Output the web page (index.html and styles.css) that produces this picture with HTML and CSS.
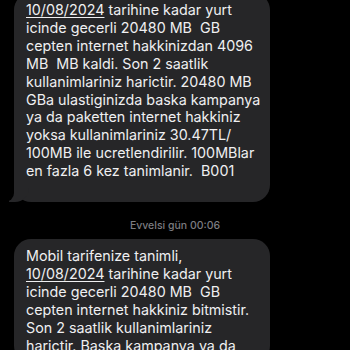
FILE: index.html
```html
<!DOCTYPE html>
<html lang="tr">
<head>
    <meta charset="UTF-8">
    <meta name="viewport" content="width=device-width, initial-scale=1.0">
    <title>Mesajlar</title>
    <link rel="stylesheet" href="styles.css">
</head>
<body>
<div class="thread">
    <div class="bubble bubble-tail bubble-last">
        <p><span class="link">10/08/2024</span> tarihine kadar yurt<br>icinde gecerli 20480 MB  GB<br>cepten internet hakkinizdan 4096<br>MB  MB kaldi. Son 2 saatlik<br>kullanimlariniz harictir. 20480 MB<br>GBa ulastiginizda baska kampanya<br>ya da paketten internet hakkiniz<br>yoksa kullanimlariniz 30.47TL/<br>100MB ile ucretlendirilir. 100MBlar<br>en fazla 6 kez tanimlanir.  B001</p>
    </div>

    <div class="stamp">Evvelsi gün 00:06</div>

    <div class="bubble">
        <p>Mobil tarifenize tanimli,<br><span class="link">10/08/2024</span> tarihine kadar yurt<br>icinde gecerli 20480 MB  GB<br>cepten internet hakkiniz bitmistir.<br>Son 2 saatlik kullanimlariniz<br>harictir. Baska kampanya ya da</p>
    </div>
</div>
</body>
</html>
```

FILE: styles.css
```css
body {
    margin: 0;
    background-color: #000;
    font-family: Inter, "Liberation Sans", sans-serif;
    color: #efeff1;
    overflow: hidden;
}

.thread {
    display: flex;
    flex-direction: column;
    align-items: flex-start;
    margin-top: -7px;
    padding-left: 14px;
}

.bubble {
    position: relative;
    width: 256px;
    box-sizing: border-box;
    padding: 8px 12px;
    background-color: #262628;
    border-radius: 17px;
}

.bubble p {
    margin: 0;
    font-size: 14.3px;
    line-height: 17.9px;
    white-space: pre;
}

.bubble-last {
    padding-bottom: 22px;
}

/* little tail at the bottom left */
.bubble-tail::before {
    content: "";
    position: absolute;
    left: -5px;
    bottom: 0;
    width: 20px;
    height: 18px;
    background-color: #262628;
    border-bottom-right-radius: 14px;
}

.bubble-tail::after {
    content: "";
    position: absolute;
    left: -10px;
    bottom: 0;
    width: 10px;
    height: 18px;
    background-color: #000;
    border-bottom-right-radius: 9px;
}

.link {
    text-decoration: underline;
    text-decoration-thickness: 1px;
    text-underline-offset: 2px;
}

.stamp {
    align-self: stretch;
    margin: 17px 14px 7px 0;
    text-align: center;
    font-size: 10.5px;
    line-height: 13px;
    font-weight: 500;
    color: #7c7c80;
}
```
